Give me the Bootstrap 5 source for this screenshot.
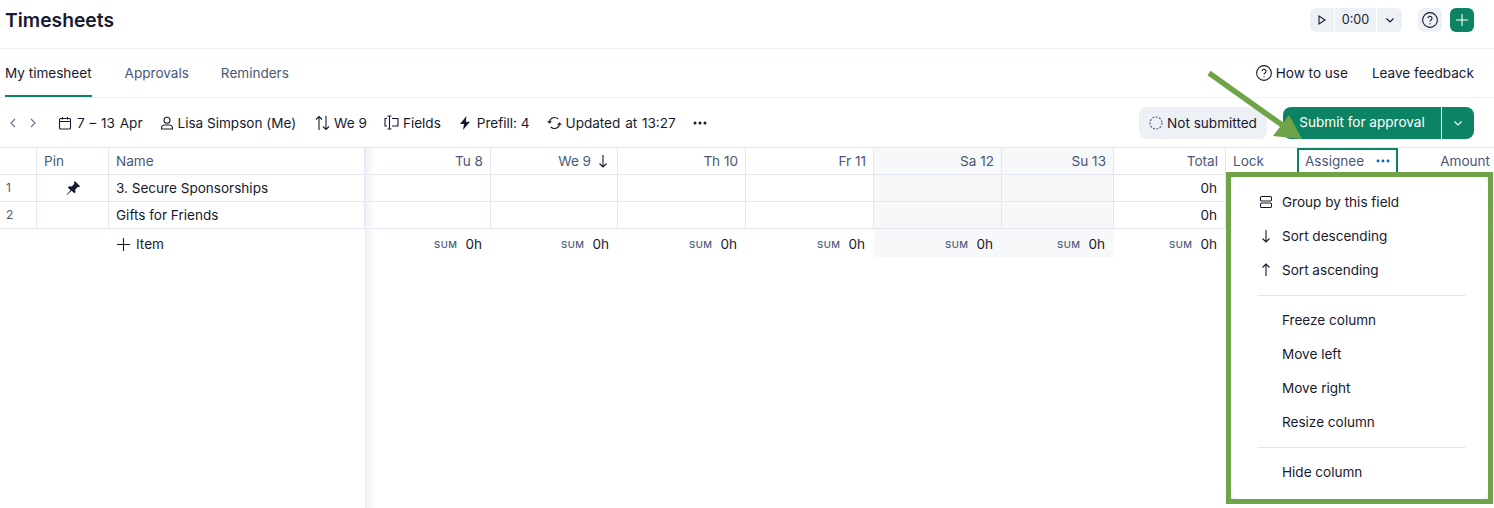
<!DOCTYPE html>
<html lang="en">
  <head>
    <meta charset="UTF-8" />
    <meta name="viewport" content="width=device-width, initial-scale=1.0" />
    <title>Timesheets</title>
    <link
      rel="stylesheet"
      href="https://cdn.jsdelivr.net/npm/bootstrap@5.3.2/dist/css/bootstrap.min.css"
    />
    <script src="https://cdn.jsdelivr.net/npm/bootstrap@5.3.2/dist/js/bootstrap.bundle.min.js"></script>
    <style>
      html, body { height: 100%; overflow: hidden; }
      body {
        font-family: Inter, "Liberation Sans", sans-serif;
        font-size: 13.55px;
        line-height: 20px;
        color: #171a2e;
        background: #fff;
        position: relative;
      }
      svg { display: block; flex: none; fill: none; stroke: currentColor; stroke-width: 1.1; }
      .page-top { height: 49px; padding: 8px 20px 0 5px; border-bottom: 1px solid #edf0f6; }
      .page-top h1 { font-size: 19.3px; line-height: 24px; font-weight: 600; margin: 0; }
      .soft-btn { height: 24px; background: #edf0f5; border-radius: 6px; color: #171a2e; }
      .timer-group { width: 92px; gap: 1px; overflow: hidden; }
      .timer-group > div { background: #edf0f5; height: 24px; }
      .timer-play { width: 24px; }
      .timer-time { width: 42px; font-size: 12.6px; }
      .timer-more { width: 25px; }
      .square-btn { width: 24px; }
      .add-btn { width: 24px; height: 24px; background: #0c8463; color: #fff; border-radius: 6px; }
      .tabs-bar { height: 49px; padding: 0 20px 0 5px; border-bottom: 1px solid #edf0f6; }
      .tab-link { height: 48px; line-height: 48px; color: #4a5778; margin-right: 32px; padding: 0; text-decoration: none; }
      .tab-link.on { color: #171a2e; border-bottom: 2px solid #0c8463; margin-right: 33px; }
      .tools-bar { height: 49px; padding: 0 20px 0 8px; }
      .tool-item { white-space: nowrap; }
      .wide-words { word-spacing: 1px; }
      .state-pill { height: 32px; width: 128px; background: #edf0f5; border-radius: 8px; margin-right: 16px; }
      .submit-main, .submit-more {
        height: 32px; background: #0c8463; color: #fff; border: 0; font-size: 13.55px; padding: 0;
      }
      .submit-main { width: 158px; border-radius: 8px 0 0 8px; margin-right: 1px; }
      .submit-more { width: 32px; border-radius: 0 8px 8px 0; }
      .submit-main:hover, .submit-more:hover { background: #0c8463; color: #fff; }
      .grid-wrap { position: relative; flex: 1; }
      .grid-wrap::after {
        content: ""; position: absolute; left: 365px; top: 1px; bottom: 0; width: 10px;
        background: linear-gradient(to right, #eef0f7, rgba(255, 255, 255, 0));
      }
      .ts-grid { table-layout: fixed; width: 1494px; border-collapse: separate; border-spacing: 0; margin: 0; border-top: 1px solid #e4e7f0; }
      .ts-grid th, .ts-grid td {
        height: 27px; padding: 0 8px; border-right: 1px solid #e4e7f0; border-bottom: 1px solid #e4e7f0;
        font-weight: 400; line-height: 18px; vertical-align: middle; color: #171a2e; background: transparent; text-align: right;
        box-shadow: none; white-space: nowrap;
      }
      .ts-grid th { color: #4a5778; padding-right: 7px; }
      .ts-grid .to-left { text-align: left; padding-left: 7px; }
      .ts-grid .row-no { color: #4a5778; font-size: 12px; padding-left: 6px; }
      .ts-grid .weekend { background: #f7f8fa; }
      .ts-grid .no-line { border-right: 0; }
      .ts-grid .sum-row td { height: 28px; border: 0; padding-top: 2px; padding-right: 9px; }
      .sum-tag { font-size: 9.5px; font-weight: 500; letter-spacing: .6px; color: #4a5778; margin-right: 4px; vertical-align: 1px; }
      .add-item { gap: 6px; margin-left: 1px; }
      .head-flex { display: flex; justify-content: flex-end; align-items: center; gap: 3px; padding-right: 2px; }
      .assignee-head { position: relative; }
      .assignee-head::after {
        content: ""; position: absolute; left: -1px; right: 0; top: 0; bottom: -1px;
        border: 2px solid #0c8463; border-bottom: 0;
      }
      .col-menu {
        position: absolute; left: 1226px; top: 172px; width: 267px; height: 332px;
        border: 5px solid #6fa347; background: #eef0f6; z-index: 5; padding: 8px 0;
      }
      .col-menu-inner {
        position: absolute; inset: 0; border-radius: 8px; background: #fff;
      }
      .menu-row { position: relative; height: 34px; display: flex; align-items: center; padding-left: 27px; }
      .menu-row svg { width: 16px; height: 16px; margin-right: 6px; }
      .menu-row span { position: absolute; left: 51px; }
      .menu-line { position: relative; height: 1px; margin: 8px 22px 7px 27px; background: #e4e7f0; opacity: 1; border: 0; }
      .note-arrow { position: absolute; left: 1200px; top: 65px; z-index: 6; }
    </style>
  </head>
  <body class="d-flex flex-column">
    <div class="page-top d-flex align-items-start justify-content-between">
      <h1>Timesheets</h1>
      <div class="d-flex align-items-center">
        <div class="timer-group d-flex rounded-2 me-3">
          <div class="timer-play d-flex align-items-center justify-content-center">
            <svg width="12" height="12" viewBox="0 0 12 12"><path d="M3 2v8l6-4z" /></svg>
          </div>
          <div class="timer-time d-flex align-items-center justify-content-center">0:00</div>
          <div class="timer-more d-flex align-items-center justify-content-center">
            <svg width="10" height="10" viewBox="0 0 10 10" stroke-width="1"><path d="M1.5 3.5 5 7l3.5-3.5" /></svg>
          </div>
        </div>
        <div class="soft-btn square-btn d-flex align-items-center justify-content-center me-2">
          <svg width="16" height="16" viewBox="0 0 16 16"><circle cx="8" cy="8" r="7.4" /><path d="M6 6.2a2 2 0 1 1 3 1.8c-.7.4-1 .8-1 1.6" /><path d="M8 11.2v1" /></svg>
        </div>
        <div class="add-btn d-flex align-items-center justify-content-center">
          <svg width="12" height="12" viewBox="0 0 12 12" stroke-width="2"><path d="M6 0v12M0 6h12" /></svg>
        </div>
      </div>
    </div>

    <div class="tabs-bar d-flex align-items-start justify-content-between">
      <nav class="d-flex">
        <a class="tab-link on" href="#">My timesheet</a>
        <a class="tab-link" href="#">Approvals</a>
        <a class="tab-link" href="#">Reminders</a>
      </nav>
      <div class="d-flex align-items-center" style="height: 48px">
        <svg class="me-1" width="16" height="16" viewBox="0 0 16 16"><circle cx="8" cy="8" r="7.4" /><path d="M6 6.2a2 2 0 1 1 3 1.8c-.7.4-1 .8-1 1.6" /><path d="M8 11.2v1" /></svg>
        <span class="me-4">How to use</span>
        <span>Leave feedback</span>
      </div>
    </div>

    <div class="tools-bar d-flex align-items-center justify-content-between">
      <div class="d-flex align-items-center">
        <svg width="10" height="12" viewBox="0 0 10 12" style="color: #66708c"><path d="M7 2 3 6l4 4" /></svg>
        <svg class="ms-2" width="12" height="12" viewBox="0 0 12 12" style="color: #66708c"><path d="M5 2l4 4-4 4" /></svg>
        <div class="tool-item wide-words d-flex align-items-center" style="margin-left: 20px">
          <svg width="14" height="14" viewBox="0 0 14 14" style="margin-right: 5px"><rect x="1.5" y="2.5" width="11" height="10.5" rx="1" /><path d="M1.5 5.5h11M4.5 1v2.5M9.5 1v2.5" /></svg>
          7 – 13 Apr
        </div>
        <div class="tool-item d-flex align-items-center" style="margin-left: 17px">
          <svg width="14" height="14" viewBox="0 0 14 14" style="margin-right: 4px"><circle cx="7" cy="4.2" r="3" /><path d="M1.5 13v-1c0-2 1.5-3 3.5-3h4c2 0 3.5 1 3.5 3v1z" /></svg>
          Lisa Simpson (Me)
        </div>
        <div class="tool-item d-flex align-items-center" style="margin-left: 19px">
          <svg width="15" height="16" viewBox="0 0 15 16" style="margin-right: 4px"><path d="M4 15V1.5M1 4.5l3-3 3 3M11 1v13.5M8 11.5l3 3 3-3" /></svg>
          We 9
        </div>
        <div class="tool-item d-flex align-items-center" style="margin-left: 17px">
          <svg width="15" height="15" viewBox="0 0 15 15" style="margin-right: 4px"><path d="M3 3.5H1v7.5h2M8 3.5h6v7.5H8M5.5 1v13M3.5 1h4M3.5 14h4" /></svg>
          Fields
        </div>
        <div class="tool-item d-flex align-items-center" style="margin-left: 18px">
          <svg width="12" height="14" viewBox="0 0 12 14" style="margin-right: 6px; fill: currentColor; stroke: none"><path d="M7.5 0 1 8h4l-1 6 7-8.2H6.8z" /></svg>
          Prefill: 4
        </div>
        <div class="tool-item wide-words d-flex align-items-center" style="margin-left: 17px">
          <svg width="15" height="14" viewBox="0 0 15 14" style="margin-right: 4px"><path d="M2.4 6a5.2 5.2 0 0 1 8.8-3M12.6 8a5.2 5.2 0 0 1-8.8 3" /><path d="M.6 5 2.4 7l2-1.8M14.4 9l-1.8-2-2 1.8" /></svg>
          Updated at 13:27
        </div>
        <svg width="14" height="4" viewBox="0 0 14 4" style="margin-left: 17px; fill: currentColor; stroke: none"><circle cx="2" cy="2" r="1.5" /><circle cx="7" cy="2" r="1.5" /><circle cx="12" cy="2" r="1.5" /></svg>
      </div>
      <div class="d-flex align-items-center">
        <div class="state-pill d-flex align-items-center justify-content-center gap-1">
          <svg width="14" height="14" viewBox="0 0 14 14" style="color: #4a5778" stroke-dasharray="2 1.4"><circle cx="7" cy="7" r="6" /></svg>
          Not submitted
        </div>
        <button class="btn submit-main" type="button">Submit for approval</button>
        <button class="btn submit-more d-flex align-items-center justify-content-center" type="button">
          <svg width="10" height="10" viewBox="0 0 10 10" stroke-width="1.3"><path d="M1.5 3.5 5 7l3.5-3.5" /></svg>
        </button>
      </div>
    </div>

    <div class="grid-wrap">
      <table class="table ts-grid">
        <colgroup id="gridCols"></colgroup>
        <thead>
          <tr>
            <th></th>
            <th class="to-left">Pin</th>
            <th class="to-left">Name</th>
            <th>Tu 8</th>
            <th>
              <div class="head-flex">We 9
                <svg class="ms-1" width="10" height="14" viewBox="0 0 10 14" style="color: #171a2e"><path d="M5 1v12M1.5 9.5 5 13l3.5-3.5" /></svg>
              </div>
            </th>
            <th>Th 10</th>
            <th>Fr 11</th>
            <th class="weekend">Sa 12</th>
            <th class="weekend">Su 13</th>
            <th>Total</th>
            <th class="to-left no-line">Lock</th>
            <th class="to-left no-line assignee-head">
              <div class="d-flex align-items-center justify-content-between">Assignee
                <svg width="14" height="4" viewBox="0 0 14 4" style="fill: #0a5fc0; stroke: none; margin-right: 1px"><circle cx="2" cy="2" r="1.4" /><circle cx="7" cy="2" r="1.4" /><circle cx="12" cy="2" r="1.4" /></svg>
              </div>
            </th>
            <th class="no-line" style="padding-right: 4px">Amount</th>
          </tr>
        </thead>
        <tbody id="gridBody"></tbody>
      </table>
    </div>

    <svg class="note-arrow" width="110" height="80" viewBox="1200 65 110 80" style="stroke: none">
      <path d="M1209 73 1285 127" stroke="#6fa347" stroke-width="5.5" fill="none" />
      <polygon points="1302,139 1273,136 1289,115" fill="#6fa347" />
    </svg>

    <div class="col-menu">
      <div class="col-menu-inner"></div>
      <div class="menu-row">
        <svg viewBox="0 0 16 16"><rect x="2.5" y="2.5" width="11" height="4.5" rx="1.2" /><rect x="2.5" y="9" width="11" height="4.5" rx="1.2" /></svg>
        <span>Group by this field</span>
      </div>
      <div class="menu-row">
        <svg viewBox="0 0 16 16"><path d="M8 2v12M4.5 10.5 8 14l3.5-3.5" /></svg>
        <span>Sort descending</span>
      </div>
      <div class="menu-row">
        <svg viewBox="0 0 16 16"><path d="M8 14V2M4.5 5.5 8 2l3.5 3.5" /></svg>
        <span>Sort ascending</span>
      </div>
      <hr class="menu-line" />
      <div class="menu-row"><span>Freeze column</span></div>
      <div class="menu-row"><span>Move left</span></div>
      <div class="menu-row"><span>Move right</span></div>
      <div class="menu-row"><span>Resize column</span></div>
      <hr class="menu-line" />
      <div class="menu-row"><span>Hide column</span></div>
    </div>

    <script>
      // column widths and rows of the sheet
      let widths = [37, 72, 256, 126, 127, 128, 128, 128, 112, 112, 72, 100, 96];
      let cols = "";
      for (let i = 0; i < widths.length; i++) {
        cols += `<col style="width: ${widths[i]}px" />`;
      }
      document.getElementById("gridCols").innerHTML = cols;

      let pin = `<svg class="mx-auto" width="16" height="16" viewBox="0 0 14 14" style="fill: #171a2e; stroke: none"><path d="M8.6.8l4.6 4.6-1 .9-.8-.3-2.4 2.3.2 2.4-1 1-2.4-2.4-3.9 3.7-.7-.1 3.7-4-2.4-2.4 1-1 2.4.2 2.3-2.4-.4-.8z" /></svg>`;
      let rows = [
        ["1", pin, "3. Secure Sponsorships"],
        ["2", "", "Gifts for Friends"],
      ];
      let html = "";
      for (let i = 0; i < rows.length; i++) {
        html += `<tr>
          <td class="to-left row-no">${rows[i][0]}</td>
          <td>${rows[i][1]}</td>
          <td class="to-left">${rows[i][2]}</td>
          <td></td><td></td><td></td><td></td>
          <td class="weekend"></td><td class="weekend"></td>
          <td>0h</td><td class="no-line"></td><td class="no-line"></td><td class="no-line"></td>
        </tr>`;
      }
      let sum = `<span class="sum-tag">SUM</span> 0h`;
      html += `<tr class="sum-row">
        <td></td><td></td>
        <td class="to-left"><div class="add-item d-flex align-items-center"><svg width="13" height="13" viewBox="0 0 13 13"><path d="M6.5 0v13M0 6.5h13" /></svg>Item</div></td>
        <td>${sum}</td><td>${sum}</td><td>${sum}</td><td>${sum}</td>
        <td class="weekend">${sum}</td><td class="weekend">${sum}</td>
        <td>${sum}</td><td></td><td></td><td></td>
      </tr>`;
      document.getElementById("gridBody").innerHTML = html;
    </script>
  </body>
</html>
